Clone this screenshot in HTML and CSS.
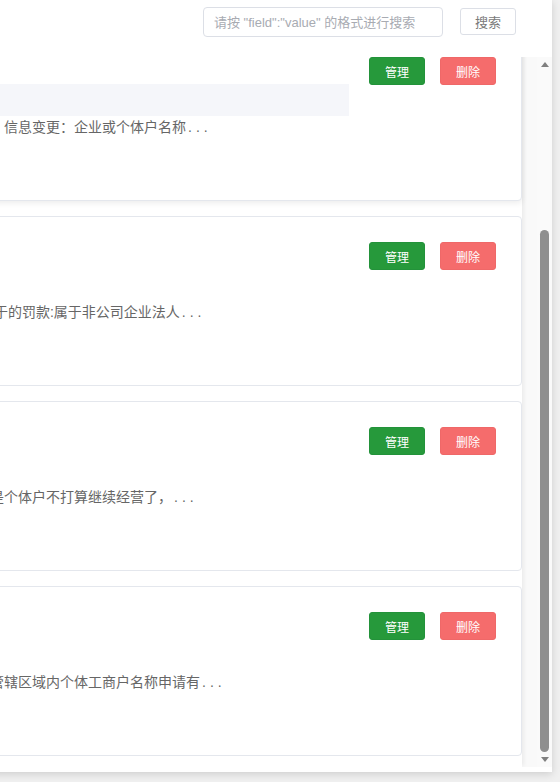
FILE: index.html
```html
<!DOCTYPE html>
<html lang="zh-CN">
<head>
    <meta charset="UTF-8">
    <meta name="viewport" content="width=device-width, initial-scale=1.0">
    <title>问答管理</title>
    <link rel="stylesheet" href="styles.css">
</head>
<body>

    <div class="drawer">
        <div class="toolbar">
            <input type="text" class="search-input" placeholder='请按 "field":"value" 的格式进行搜索'>
            <button class="search-btn">搜索</button>
        </div>

        <div class="scroll-area">
            <div class="scroller" id="scroller">
                <div class="list">
                    <div class="card">
                        <div class="info">
                            <div class="title"></div>
                            <p class="desc">户设立登记：个体工商户申请设立登记需要提交...</p>
                        </div>
                        <div class="actions">
                            <button class="btn btn-manage">管理</button>
                            <button class="btn btn-delete">删除</button>
                        </div>
                    </div>

                    <div class="card is-hover">
                        <div class="info">
                            <div class="title"></div>
                            <p class="desc">）信息变更：企业或个体户名称<span class="more">...</span></p>
                        </div>
                        <div class="actions">
                            <button class="btn btn-manage">管理</button>
                            <button class="btn btn-delete">删除</button>
                        </div>
                    </div>

                    <div class="card">
                        <div class="info">
                            <div class="title"></div>
                            <p class="desc">:于的罚款:属于非公司企业法人<span class="more">...</span></p>
                        </div>
                        <div class="actions">
                            <button class="btn btn-manage">管理</button>
                            <button class="btn btn-delete">删除</button>
                        </div>
                    </div>

                    <div class="card">
                        <div class="info">
                            <div class="title"></div>
                            <p class="desc">是个体户不打算继续经营了，<span class="more">...</span></p>
                        </div>
                        <div class="actions">
                            <button class="btn btn-manage">管理</button>
                            <button class="btn btn-delete">删除</button>
                        </div>
                    </div>

                    <div class="card">
                        <div class="info">
                            <div class="title"></div>
                            <p class="desc">管辖区域内个体工商户名称申请有<span class="more">...</span></p>
                        </div>
                        <div class="actions">
                            <button class="btn btn-manage">管理</button>
                            <button class="btn btn-delete">删除</button>
                        </div>
                    </div>
                </div>
            </div>

            <div class="scrollbar">
                <span class="arrow arrow-up"></span>
                <div class="track" id="track"><div class="thumb" id="thumb"></div></div>
                <span class="arrow arrow-down"></span>
            </div>
        </div>
    </div>

    <script>
        // 列表默认滚动到底部，并同步滚动条
        const scroller = document.getElementById("scroller");
        const track = document.getElementById("track");
        const thumb = document.getElementById("thumb");

        function syncThumb() {
            const ratio = scroller.clientHeight / scroller.scrollHeight;
            const trackHeight = track.clientHeight;
            const thumbHeight = Math.round(trackHeight * ratio);
            const maxScroll = scroller.scrollHeight - scroller.clientHeight;
            const offset = maxScroll > 0 ? scroller.scrollTop / maxScroll * (trackHeight - thumbHeight) : 0;
            thumb.style.height = thumbHeight + "px";
            thumb.style.marginTop = Math.round(offset) + "px";
        }

        scroller.scrollTop = scroller.scrollHeight;
        scroller.addEventListener("scroll", syncThumb);
        syncThumb();
    </script>

</body>
</html>
```

FILE: styles.css
```css
body {
    margin: 0;
    background: #f0f0f0;
    font-family: "Liberation Sans", "Noto Sans CJK SC", sans-serif;
    color: #606266;
    overflow: hidden;
}
.drawer {
    position: fixed;
    top: 0;
    right: 8px;
    width: 752px;
    height: 772px;
    padding-bottom: 5px;
    box-sizing: border-box;
    background: #fff;
    box-shadow: 0 2px 8px rgba(0, 0, 0, 0.15);
    display: flex;
    flex-direction: column;
}
.toolbar {
    height: 57px;
    flex-shrink: 0;
    box-sizing: border-box;
    padding: 7px 36px 0 0;
    display: flex;
    justify-content: flex-end;
    align-items: flex-start;
    gap: 17px;
}
.search-input {
    width: 240px;
    height: 30px;
    box-sizing: border-box;
    padding: 0 10px;
    border: 1px solid #dcdfe6;
    border-radius: 4px;
    font-family: inherit;
    font-size: 13px;
    color: #606266;
    outline: none;
}
.search-input::placeholder {
    color: #a8abb2;
}
.search-btn {
    margin-top: 1px;
    width: 56px;
    height: 27px;
    padding: 0;
    border: 1px solid #dcdfe6;
    border-radius: 3px;
    background: #fff;
    font-family: inherit;
    font-size: 13px;
    color: #7a7a7a;
    cursor: pointer;
}
.scroll-area {
    height: 710px;
    display: flex;
    background: #f9f9f9;
}
.scroller {
    flex: 1;
    overflow-y: scroll;
    overflow-x: hidden;
    scrollbar-width: none;
}
.scroller::-webkit-scrollbar {
    display: none;
}
.scrollbar {
    width: 15px;
    flex-shrink: 0;
    display: flex;
    flex-direction: column;
    background: #fafafa;
}
.arrow {
    height: 15px;
    display: flex;
    align-items: center;
    justify-content: center;
}
.arrow::before {
    content: "";
    width: 0;
    height: 0;
    border-left: 4.5px solid transparent;
    border-right: 4.5px solid transparent;
}
.arrow-up::before {
    border-bottom: 5px solid #808080;
}
.arrow-down::before {
    border-top: 5px solid #808080;
}
.track {
    flex: 1;
}
.thumb {
    width: 9px;
    margin-left: 3px;
    border-radius: 5px;
    background: #8f8f8f;
}
.list {
    margin-right: 15px;
    padding: 4px 0 11px;
    background: #fff;
    box-shadow: 3px 0 4px -1px rgba(0, 0, 0, 0.06);
    display: flex;
    flex-direction: column;
    gap: 15px;
}
.card {
    height: 170px;
    flex-shrink: 0;
    box-sizing: border-box;
    border: 1px solid #e4e7ed;
    border-radius: 4px;
    background: #fff;
    display: flex;
    align-items: flex-start;
}
.card.is-hover {
    box-shadow: 0 2px 6px rgba(0, 0, 0, 0.08);
}
.info {
    flex: 1;
    min-width: 0;
    padding: 52px 0 0 189px;
}
.title {
    width: 359px;
    height: 32px;
}
.card.is-hover .title {
    background: #f5f6fa;
}
.desc {
    margin: 1px 0 0;
    font-size: 14px;
    line-height: 20px;
    color: #666;
    white-space: nowrap;
}
.desc .more {
    margin-left: 2px;
    letter-spacing: 4px;
    color: #666;
}
.actions {
    display: flex;
    gap: 15px;
    padding: 25px 25px 0 0;
}
.btn {
    width: 56px;
    height: 28px;
    padding: 0;
    border-radius: 3px;
    font-family: inherit;
    font-size: 12px;
    color: #fff;
    cursor: pointer;
}
.btn-manage {
    background: #26993b;
    border: 1px solid #23923a;
}
.btn-delete {
    background: #f56c6c;
    border: 1px solid #ef6868;
}
```
